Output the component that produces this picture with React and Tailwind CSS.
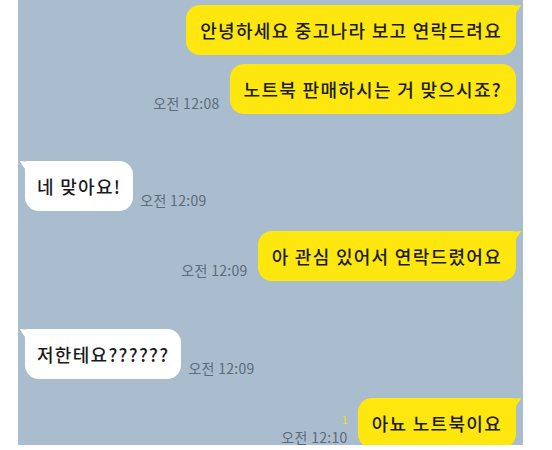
import React from 'react';

const font = { fontFamily: '"Noto Sans CJK KR", "Noto Sans", sans-serif' };

const TailRight = () => (
  <svg className="absolute -right-[6px] top-0" width="12" height="16" viewBox="0 0 12 16">
    <path d="M0 0 C4 1 8 0.5 11.5 -0.5 C9 4 5 10 0 15 Z" fill="#fde70f" />
  </svg>
);

const TailLeft = () => (
  <svg className="absolute -left-[6px] top-0" width="12" height="16" viewBox="0 0 12 16">
    <path d="M12 0 C8 1 4 0.5 0.5 -0.5 C3 4 7 10 12 15 Z" fill="#ffffff" />
  </svg>
);

const Time = ({ children }) => (
  <span className="text-[14px] leading-4 tracking-[0.3px] text-[#5d6b78] whitespace-nowrap mb-[3px]">{children}</span>
);

const Mine = ({ text, time, tail, unread, className = '' }) => (
  <div className={`flex items-end justify-end gap-[10px] pr-[7px] ${className}`}>
    <div className="flex flex-col items-end">
      {unread && <span className="text-[11px] leading-4 text-[#f2dc1a] mb-[2px]">1</span>}
      {time && <Time>{time}</Time>}
    </div>
    <div
      className={`relative bg-[#fde70f] text-[#1b1b1b] text-[18px] leading-[26px] tracking-[1.3px] font-medium px-[14px] py-[12px] rounded-[14px] ${
        tail ? 'rounded-tr-[3px]' : ''
      }`}
    >
      {tail && <TailRight />}
      {text}
    </div>
  </div>
);

const Theirs = ({ text, time, className = '' }) => (
  <div className={`flex items-end gap-[7px] pl-[7px] ${className}`}>
    <div className="relative bg-white text-[#1b1b1b] text-[18px] leading-[26px] tracking-[1.3px] font-medium pl-[12px] pr-[12px] py-[12px] rounded-[14px] rounded-tl-[3px]">
      <TailLeft />
      {text}
    </div>
    <Time>{time}</Time>
  </div>
);

export default function App() {
  return (
    <div className="w-[552px] h-[450px] bg-white" style={font}>
      <div className="ml-[18px] w-[505px] h-[445px] bg-[#a9bdcf] overflow-hidden pt-[5px]">
        <Mine text="안녕하세요 중고나라 보고 연락드려요" tail />
        <Mine text="노트북 판매하시는 거 맞으시죠?" time="오전 12:08" className="mt-[9px]" />
        <Theirs text="네 맞아요!" time="오전 12:09" className="mt-[47px]" />
        <Mine text="아 관심 있어서 연락드렸어요" time="오전 12:09" tail className="mt-[20px]" />
        <Theirs text="저한테요??????" time="오전 12:09" className="mt-[48px]" />
        <Mine text="아뇨 노트북이요" time="오전 12:10" tail unread className="mt-[19px]" />
      </div>
    </div>
  );
}
